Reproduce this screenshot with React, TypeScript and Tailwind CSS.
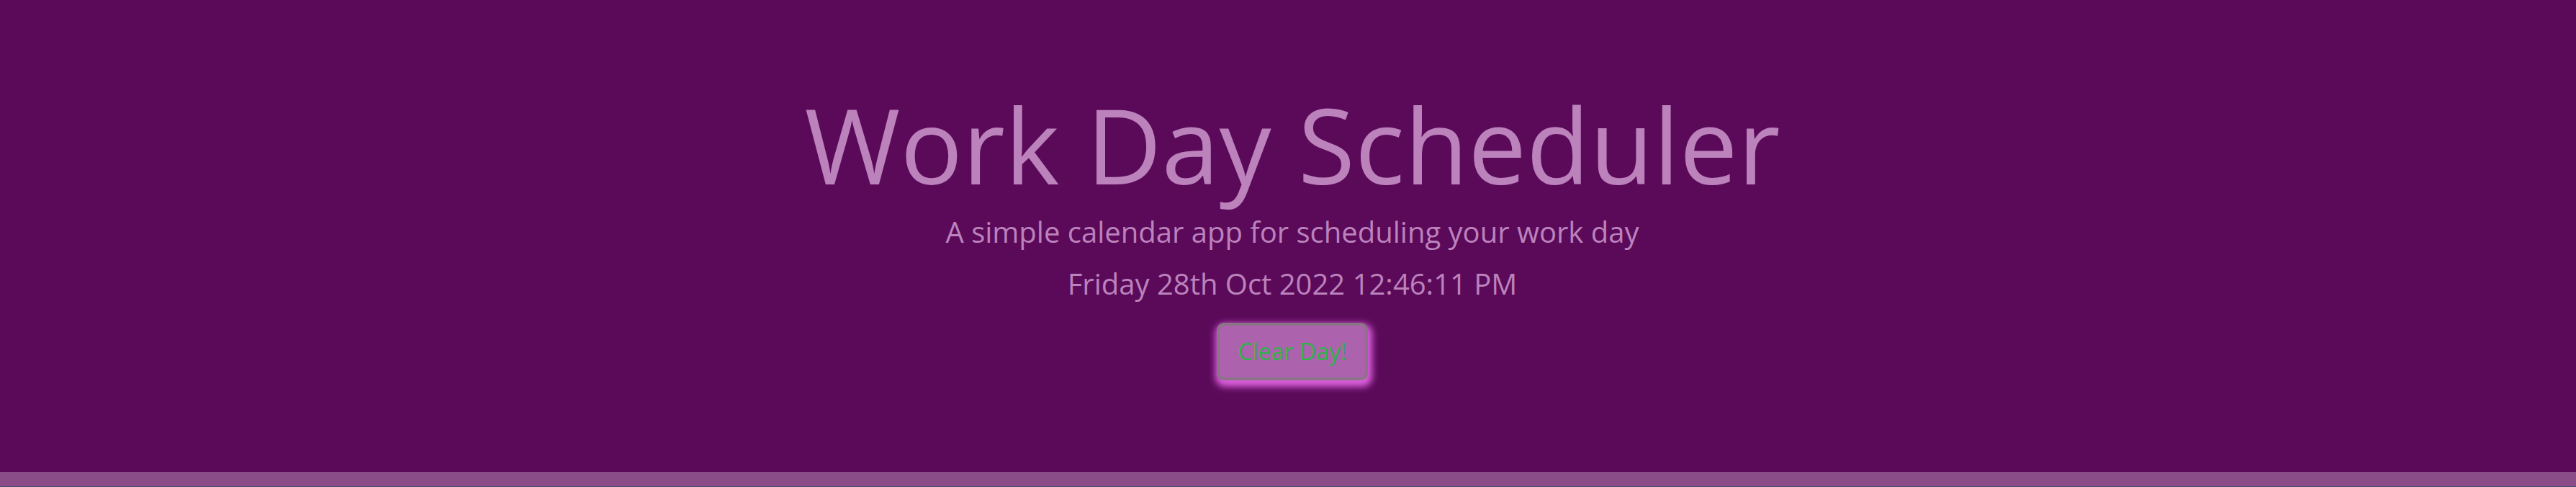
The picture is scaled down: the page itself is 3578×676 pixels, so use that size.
export default function App() {
  return (
    <div className="flex h-[676px] w-full flex-col bg-[#5b0a5a] font-['Open_Sans',sans-serif]">
      <header className="flex h-[655px] flex-col items-center pl-[12px] pt-[114px] text-center text-[#bc82bc]">
        <h1 className="text-[144px] font-normal leading-[1.2]">Work Day Scheduler</h1>
        <p className="mt-[5px] text-[40px] font-normal leading-[1.5]">
          A simple calendar app for scheduling your work day
        </p>
        <p className="mt-[12px] text-[40px] font-normal leading-[1.5]">Friday 28th Oct 2022 12:46:11 PM</p>
        <button className="mt-[24px] rounded-[10px] border-4 border-[#8b7488] bg-[#ad62ad] px-[26px] py-[12px] text-[32px] leading-[1.5] text-[#2db449] shadow-[2px_5px_10px_4px_#dc5fdc]">
          Clear Day!
        </button>
      </header>
      <div className="h-[21px] border-b border-[#4a4a6a] bg-[#8a4d87]" />
    </div>
  );
}
